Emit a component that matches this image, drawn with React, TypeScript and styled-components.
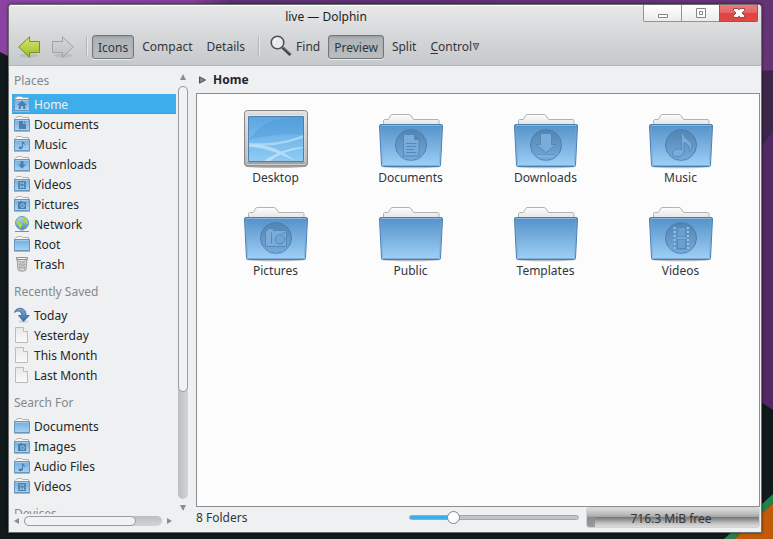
import React, { useState } from "react";
import styled, { createGlobalStyle, css } from "styled-components";

const GlobalStyle = createGlobalStyle`
  * { box-sizing: border-box; }
  body { margin: 0; background: #11181a; }
  body, button, input { font-family: "Noto Sans", "Open Sans", sans-serif; font-size: 12px; color: #31363b; }
  ul { list-style: none; margin: 0; padding: 0; }
`;

const Desktop = styled.div`
  position: relative;
  display: flex;
  height: 100vh;
  padding: 4px 11px 6px 8px;
  overflow: hidden;
`;

const Wallpaper = styled.svg`
  position: absolute;
  inset: 0;
  width: 100%;
  height: 100%;
`;

const Window = styled.section`
  position: relative;
  flex: 1;
  min-width: 0;
  display: flex;
  flex-direction: column;
  border: 1px solid #6d6f70;
  border-radius: 4px 4px 0 0;
  background: #eff0f1;
  overflow: hidden;
  box-shadow: 0 0 3px rgba(0, 0, 0, 0.6);
`;

const Header = styled.header`
  border-bottom: 1px solid #b4b7b9;
  background: linear-gradient(#e9e9e9, #d5d7d9 50%, #c6c9cb);
  box-shadow: inset 0 1px #fff;
`;

const TitleBar = styled.div`
  display: flex;
  height: 23px;
  padding-right: 3px;
`;

const Title = styled.h1`
  flex: 1;
  margin: 0;
  text-align: center;
  font-size: 12px;
  font-weight: 400;
  line-height: 23px;
  color: #1c1e20;
`;

const WindowButton = styled.button<{ $close?: boolean }>`
  display: grid;
  place-items: center;
  width: 39px;
  height: 17px;
  padding: 0;
  margin-right: -1px;
  border: 1px solid #939393;
  border-top: 0;
  background: linear-gradient(#fff, #ececec);
  &:first-of-type { border-bottom-left-radius: 2px; }
  ${(p) => p.$close && css`
    margin-right: 0;
    border-color: #8e5a5c;
    border-bottom-right-radius: 2px;
    background: linear-gradient(#ea7a79, #e66463 50%, #e04343 50%, #e24646);
  `}
`;

const Toolbar = styled.div`
  display: flex;
  align-items: center;
  height: 37px;
  padding: 0 9px;
`;

const NavButton = styled.button`
  display: flex;
  margin-right: 12px;
  padding: 0;
  border: 0;
  background: none;
`;

const Separator = styled.span`
  width: 2px;
  height: 20px;
  margin-right: 4px;
  border-left: 1px solid #b4b7b9;
  border-right: 1px solid #e6e7e8;
`;

const ToolButton = styled.button<{ $wide?: boolean; $menu?: boolean }>`
  display: flex;
  align-items: center;
  gap: ${(p) => (p.$menu ? 0 : 4)}px;
  height: 24px;
  margin-right: ${(p) => (p.$wide ? 7 : 2)}px;
  padding: 0 5px 1px;
  border: 1px solid transparent;
  border-radius: 3px;
  background: none;
  white-space: nowrap;
  &[aria-pressed="true"] {
    padding: 1px 5px 0;
    border-color: #72777a;
    background: linear-gradient(#adb2b5, #b9bdc0);
    box-shadow: inset 0 1px 2px rgba(0, 0, 0, 0.15), 0 1px rgba(255, 255, 255, 0.6);
  }
`;

const Accel = styled.span`
  text-decoration: underline;
  text-underline-offset: 2px;
`;

const Body = styled.div`
  flex: 1;
  min-height: 0;
  display: grid;
  grid-template-columns: 183px 1fr;
  column-gap: 4px;
`;

const Sidebar = styled.aside`
  display: grid;
  grid-template-columns: 1fr 10px;
  grid-template-rows: minmax(0, 1fr) 18px;
  column-gap: 2px;
  min-height: 0;
  padding-right: 4px;
`;

const Places = styled.nav`
  min-height: 0;
  padding-left: 3px;
  overflow: hidden;
`;

const PlacesHeading = styled.h2`
  margin: 0;
  padding: 11px 2px 6px;
  font-size: 12px;
  font-weight: 400;
  line-height: 14px;
  color: #85888b;
  &:first-child { padding-top: 8px; }
`;

const PlaceLink = styled.a`
  display: flex;
  align-items: center;
  gap: 4px;
  height: 20px;
  padding: 0 2px;
  color: #232629;
  text-decoration: none;
  white-space: nowrap;
  &[aria-current] {
    background: #3daee9;
    color: #eff0f1;
    box-shadow: inset 0 -1px #35a3dc;
  }
`;

const ScrollBar = styled.div<{ $horizontal?: boolean }>`
  display: flex;
  ${(p) => p.$horizontal
    ? css`align-items: center; gap: 5px; height: 10px; margin-top: 2px; padding: 0 4px 0 5px;`
    : css`flex-direction: column; align-items: center; gap: 6px; padding: 8px 0 3px;`}
`;

const ScrollArrow = styled.button`
  display: flex;
  padding: 0;
  border: 0;
  background: none;
`;

const ScrollTrack = styled.div<{ $horizontal?: boolean }>`
  flex: 1;
  align-self: stretch;
  border-radius: 5px;
  background: linear-gradient(${(p) => (p.$horizontal ? "" : "90deg, ")}#bdbebf, #d3d4d5);
`;

const ScrollThumb = styled.div<{ $horizontal?: boolean }>`
  width: ${(p) => (p.$horizontal ? "81%" : "100%")};
  height: ${(p) => (p.$horizontal ? "100%" : "74%")};
  border: 1px solid #999b9d;
  border-radius: 5px;
  background: #f1f2f3;
`;

const Content = styled.main`
  min-width: 0;
  display: flex;
  flex-direction: column;
  padding-right: 1px;
`;

const Breadcrumb = styled.nav`
  display: flex;
  align-items: center;
  gap: 7px;
  height: 27px;
  padding: 0 3px;
  font-weight: 700;
  a { color: #232629; text-decoration: none; }
`;

const FileView = styled.ul`
  flex: 1;
  min-height: 0;
  display: grid;
  grid-template-columns: repeat(auto-fill, 135px);
  grid-auto-rows: 93px;
  align-content: start;
  && { padding: 15px 0 0 11px; }
  border: 1px solid #8b8f92;
  background: #fcfcfc;
  overflow: hidden;
`;

const FileButton = styled.button`
  display: flex;
  flex-direction: column;
  align-items: center;
  width: 100%;
  padding: 0;
  border: 0;
  background: none;
  line-height: 18px;
`;

const StatusBar = styled.footer`
  display: flex;
  align-items: flex-start;
  height: 25px;
  line-height: 22px;
`;

const Summary = styled.span`
  flex: 1;
`;

const ZoomSlider = styled.input`
  appearance: none;
  width: 170px;
  height: 21px;
  margin: 0 7px 0 0;
  background: none;
  &::-webkit-slider-runnable-track {
    height: 5px;
    border: 1px solid #a2a6a8;
    border-radius: 3px;
    background: linear-gradient(90deg, #3daee9 26%, #c0c5c7 26%);
  }
  &::-webkit-slider-thumb {
    appearance: none;
    width: 13px;
    height: 13px;
    margin-top: -5px;
    border: 1px solid #7f8487;
    border-radius: 50%;
    background: #fdfdfd;
  }
`;

const Capacity = styled.div`
  width: 174px;
  height: 21px;
  border: 1px solid #d2d3d4;
  border-radius: 3px;
  background: linear-gradient(#dcdddd, #b9b9b9 35%, #a0a0a0 48%, #7b7b7b 50%, #949494 62%, #bcbcbc 78%, #dfdfdf);
  padding-right: 4px;
  text-align: center;
`;

const CapacityUsed = styled.div`
  width: 5%;
  height: 19px;
  margin-bottom: -19px;
  border-radius: 2px 0 0 2px;
  background: linear-gradient(transparent 45%, #8b8b8b 50%, #9c9c9c);
`;

type Glyph = "none" | "home" | "document" | "music" | "download" | "video" | "camera";

const SMALL_GLYPHS: Record<Glyph, React.ReactNode> = {
  none: null,
  home: <path d="M8 4.5 3 9h1.7v4h2.2v-3h2.2v3h2.2V9H13z" />,
  document: <path d="M5 5h4v3h3v5H5zM10 5l2 2h-2z" />,
  music: <path d="M8 4.500c.3 1.800 3.900 2 3.200 5.500-.3-1.700-1.200-2-2.200-2V11c0 2.600-4.500 2.700-4.500 1 0-1.300 2.200-1.700 3.500-1.300z" />,
  download: <path d="M6.500 5h3v3.500H12L8 12.800 4 8.500h2.500z" />,
  video: <path fillRule="evenodd" d="M4 5h8v8H4zM6 6v2.300h1.600V6zm2.400 0v2.300H10V6zM6 9.500V12h1.600V9.500zm2.400 0V12H10V9.500zM4.500 6v1h.8V6zm0 2.500v1h.8v-1zm0 2.500v1h.8v-1zM10.700 6v1h.8V6zm0 2.500v1h.8v-1zm0 2.500v1h.8v-1z" />,
  camera: <path fillRule="evenodd" d="M4 6h2V5h2v1h4v7H4zm4.500 1.300a2.300 2.300 0 1 0 .1 0zm0 1.200a1.200 1.200 0 1 1-.1 0z" />,
};

function SmallFolder({ glyph = "none" }: { glyph?: Glyph }) {
  return (
    <svg width="16" height="16" viewBox="0 0 16 16" aria-hidden="true">
      <path d="M1 15.500V2.500L2 1.500h.5L3 .5h4.500l1 1H14.500v3" fill="#f8f8f8" stroke="#aeb2b5" />
      <path d="M0 15.500h16" stroke="#aeb4b9" />
      <path d="M.5 3.500h15v11H.5z" fill="url(#small-front)" stroke="#6b96bb" />
      <path d="M1.500 4.500h13" stroke="#a3cbea" />
      <g fill="#4c7fab">{SMALL_GLYPHS[glyph]}</g>
    </svg>
  );
}

function NetworkIcon() {
  return (
    <svg width="16" height="16" viewBox="0 0 16 16" aria-hidden="true">
      <path d="M1 15.500h14" stroke="#898d90" />
      <path d="M6 14h4v1H6z" fill="#c9cdd0" />
      <circle cx="8" cy="7" r="6.500" fill="url(#globe)" stroke="#5f97cf" />
      <path d="M6.500 2C8.500.8 11 1 12.500 3c1.300 1.500 1.700 4 .5 5.500-.7-.2-1.200-1-1-2-1 0-2.500.5-3-.8-.3-1 .3-1.700-.8-1.700-.7 0-1.200-.8-1.700-2zM2.500 4.500C4 4.300 4.600 6 6 6.500c1.500.5 2.500 1.500 2 3S6.500 11.500 6 12.500C4.500 11 5 9.500 3.500 8.500 2.300 7.500 2 6 2.500 4.500z" fill="#b3d63c" />
      <path d="M10 9.500c1-.5 1.700 0 1.500 1s-1 1.300-1.500 1z" fill="#86b51f" />
    </svg>
  );
}

function TrashIcon() {
  return (
    <svg width="16" height="16" viewBox="0 0 16 16" aria-hidden="true">
      <path d="M3 2.500 4 14c1 1.500 7 1.500 8 0l1-11.500z" fill="#e2e2e2" stroke="#9a9a9a" />
      <path d="M5 4.500 5.500 14M7 5v9.500M9 5v9.500M11 4.500 10.500 14" stroke="#8f8f8f" strokeDasharray="2 1" />
      <path d="M3.500 7.500h9M4 10.500h8" stroke="#c2c2c2" />
      <path d="M2.500 1.500h11v2h-11z" fill="#d9d9d9" stroke="#919191" />
      <path d="M4 2.500h8" stroke="#f1f1f1" />
    </svg>
  );
}

function TodayIcon() {
  return (
    <svg width="16" height="16" viewBox="0 0 16 16" aria-hidden="true">
      <ellipse cx="9.500" cy="14.500" rx="5" ry="1.300" fill="#cfd3d7" />
      <path d="M.5 5.500C1.500 1 7 .2 9.800 2.500c2 1.500 2.200 3.500 2.200 6h3.300L9.500 14.500 4.500 8.500H7.700c0-3-1.500-4.500-3.700-4.500C2.500 4 1.500 5 .5 5.500z" fill="url(#today)" stroke="#3d6797" strokeWidth=".8" />
    </svg>
  );
}

function PageIcon() {
  return (
    <svg width="16" height="16" viewBox="0 0 16 16" aria-hidden="true">
      <path d="M1.500.5h8l4 4v11h-12z" fill="url(#page)" stroke="#bcbcbc" />
      <path d="M9.500.5v4h4" fill="#fff" stroke="#bcbcbc" />
    </svg>
  );
}

const LARGE_GLYPHS: Record<Glyph, React.ReactNode> = {
  none: null,
  home: <path d="M32 24 20 35h4v10h16V35h4z" />,
  document: (
    <>
      <path d="M24.500 25.500h11l4.500 5v16.500H24.500z" />
      <path d="M35.500 25.500v5H40" fill="#4f83b2" />
      <path d="M27 34.500h10.500M27 37.500h10.500M27 40.500h8M27 43.500h10.500" fill="none" />
    </>
  ),
  download: (
    <>
      <path d="M26.500 24.500h11v11h4.500L32 43.800l-10-8.300h4.500z" />
      <path d="M23.500 46h17" />
      <path d="M23.500 47h17" stroke="#93c3ed" />
    </>
  ),
  music: <path d="M32.500 24H34c1 7.500 9 6.500 9 13 0 2.500-1 4.500-2.500 6 .5-5-1.500-8.500-5.500-9.500v8.500c0 6.500-10.500 8-11.500 3.300-.5-4.300 4.500-6.300 9-4.800z" />,
  camera: (
    <>
      <path d="M21.500 28.500h2l.5-2h5l.5 2h13v16h-21z" />
      <path d="M27.500 30.500v11M38 31h4" fill="none" />
      <circle cx="36" cy="37.500" r="4.800" fill="#6fa4d3" />
    </>
  ),
  video: (
    <>
      <path d="M24.500 25h15v22h-15z" fill="#6498c6" stroke="#5b90c0" />
      <path d="M28.500 25.500h8v9.500h-8zM28.500 37h8v9.500h-8z" fill="#6a9fcf" />
      <path d="M25.500 25v22M39 25v22" stroke="#94c3ec" strokeDasharray="2 2" strokeWidth="2" />
      <path d="M28 36h9" stroke="#94c3ec" />
    </>
  ),
};

const LargeFolder = ({ glyph }: { glyph: Glyph }) => (
  <svg width="64" height="60" viewBox="0 0 64 60" aria-hidden="true">
    <ellipse cx="32" cy="57.500" rx="30" ry="1.800" fill="#b8bdc2" />
    <path d="M4.500 18v-6c0-1 .5-1.500 1.500-1.500h3c1.500 0 2-5 4-5h17c3 0 3 5 5 5h23c1.500 0 2 .5 2 1.500v6z" fill="url(#paper)" stroke="#b2b2b2" />
    <path d="M1.500 15.500h61c.8 0 1.200.700 1 1.500L61.500 56c0 1-1 1.500-2 1.500h-55c-1 0-2-.5-2-1.500L.5 17c0-1 .2-1.500 1-1.500z" fill="url(#front)" stroke="#4a80b0" />
    <path d="M2 16.500h60" stroke="#86b7e2" />
    <path d="M4 56.500h56" stroke="#7badd8" />
    <path d="M2 18 3.500 55M62 18 60.500 55" stroke="#75a9d8" strokeOpacity=".6" />
    {glyph !== "none" && (
      <>
        <circle cx="32" cy="36" r="15.500" fill="url(#badge)" stroke="#4c80af" />
        <path d="M18.500 44a15.500 15.500 0 0 0 27 0" fill="none" stroke="#7db1df" strokeOpacity=".6" />
        <g fill="#79acda" stroke="#5388b9" strokeWidth="1">{LARGE_GLYPHS[glyph]}</g>
      </>
    )}
  </svg>
);

const DesktopIcon = () => (
  <svg width="64" height="60" viewBox="0 0 64 60" aria-hidden="true">
    <ellipse cx="32" cy="57.500" rx="31" ry="1.500" fill="#b9b9b9" />
    <rect x=".5" y="1.500" width="63" height="55.500" rx="3" fill="url(#frame)" stroke="#868686" />
    <rect x="2" y="3" width="60" height="52.500" rx="2" fill="none" stroke="#f4f4f4" strokeOpacity=".6" />
    <path d="M3.500 6.500h57v46.500h-57z" fill="#f3f3f3" />
    <path d="M4.500 7.500h55v45h-55z" fill="url(#screen)" stroke="#4f7fb0" />
    <path d="M5 31C14 16 30 9 50 8h9v18C42 24 20 27 5 31z" fill="#4593d4" fillOpacity=".35" />
    <path d="M5 34C26 35 42 33 59 26v3C40 36 20 38 5 36z" fill="#d3effd" fillOpacity=".5" />
    <path d="M5 36C24 34 38 42 52 52 36 45 21 38 5 38zM20 52c13-9 25-13 39-14v1C42 42 32 47 26 52z" fill="#e8f8ff" fillOpacity=".5" />
  </svg>
);

const SharedGradients = () => (
  <defs>
    {[
      ["small-front", "#72abd9", "#a5d4f8"],
      ["front", "#5491c8", "#a0d0f7"],
      ["badge", "#5283b0", "#76abdb"],
      ["paper", "#fdfdfd", "#dfdfdf"],
      ["frame", "#dedede", "#9d9d9d"],
      ["screen", "#5ca5e0", "#8fccf6"],
      ["page", "#e9e9e9", "#fafafa"],
      ["today", "#7ba6d3", "#386ca8"],
      ["globe", "#b2dffa", "#3f86cf"],
      ["arrow-green", "#dbe86a", "#9bbb2e"],
      ["arrow-grey", "#d4d6d8", "#bec1c3"],
    ].map(([id, top, bottom]) => (
      <linearGradient key={id} id={id} x1="0" y1="0" x2="0" y2="1">
        <stop offset="0" stopColor={top} />
        <stop offset="1" stopColor={bottom} />
      </linearGradient>
    ))}
    <linearGradient id="purple" x1="0" y1="0" x2="1" y2="0">
      <stop offset="0" stopColor="#8c43a4" />
      <stop offset=".25" stopColor="#82409a" />
      <stop offset=".3" stopColor="#5b3070" />
      <stop offset="1" stopColor="#653474" />
    </linearGradient>
  </defs>
);

const NavArrow = ({ forward = false }: { forward?: boolean }) => (
  <svg width="22" height="22" viewBox="0 0 22 22" aria-hidden="true">
    <ellipse cx="11" cy="19.500" rx="9" ry="2" fill="#a9adaf" fillOpacity=".5" />
    {forward ? (
      <path d="M.5 5.500h10V.8L21.300 11 10.500 21.200v-4.700H.5z" fill="url(#arrow-grey)" stroke="#a0a3a5" />
    ) : (
      <path d="M21.500 5.500h-10V.8L.7 11l10.800 10.200v-4.700h10z" fill="url(#arrow-green)" stroke="#6f9418" />
    )}
  </svg>
);

const SearchIcon = () => (
  <svg width="22" height="22" viewBox="0 0 22 22" aria-hidden="true">
    <circle cx="7.500" cy="7.500" r="6.300" fill="#e7e9ea" stroke="#4f5355" strokeWidth="1.600" />
    <path d="M4 7a4 4 0 0 1 4-3.500" fill="none" stroke="#fff" />
    <path d="m12.500 12.500 8 7.500" stroke="#404345" strokeWidth="3" />
    <path d="m13 11.800 7 6.500" stroke="#85888a" />
  </svg>
);

interface Place { label: string; icon: React.ReactNode }

const SECTIONS: { heading: string; places: Place[] }[] = [
  {
    heading: "Places",
    places: [
      { label: "Home", icon: <SmallFolder glyph="home" /> },
      { label: "Documents", icon: <SmallFolder glyph="document" /> },
      { label: "Music", icon: <SmallFolder glyph="music" /> },
      { label: "Downloads", icon: <SmallFolder glyph="download" /> },
      { label: "Videos", icon: <SmallFolder glyph="video" /> },
      { label: "Pictures", icon: <SmallFolder glyph="camera" /> },
      { label: "Network", icon: <NetworkIcon /> },
      { label: "Root", icon: <SmallFolder /> },
      { label: "Trash", icon: <TrashIcon /> },
    ],
  },
  {
    heading: "Recently Saved",
    places: [
      { label: "Today", icon: <TodayIcon /> },
      { label: "Yesterday", icon: <PageIcon /> },
      { label: "This Month", icon: <PageIcon /> },
      { label: "Last Month", icon: <PageIcon /> },
    ],
  },
  {
    heading: "Search For",
    places: [
      { label: "Documents", icon: <SmallFolder /> },
      { label: "Images", icon: <SmallFolder glyph="camera" /> },
      { label: "Audio Files", icon: <SmallFolder glyph="music" /> },
      { label: "Videos", icon: <SmallFolder glyph="video" /> },
    ],
  },
  { heading: "Devices", places: [] },
];

const FILES: { label: string; glyph: Glyph | "desktop" }[] = [
  { label: "Desktop", glyph: "desktop" },
  { label: "Documents", glyph: "document" },
  { label: "Downloads", glyph: "download" },
  { label: "Music", glyph: "music" },
  { label: "Pictures", glyph: "camera" },
  { label: "Public", glyph: "none" },
  { label: "Templates", glyph: "none" },
  { label: "Videos", glyph: "video" },
];

const ARROWS = {
  up: { size: [6, 6], d: "M3 0 6 6H0z" },
  down: { size: [6, 6], d: "M0 0h6L3 6z" },
  left: { size: [5, 6], d: "M5 0v6L0 3z" },
  right: { size: [5, 6], d: "M0 0l5 3-5 3z" },
};

const ArrowButton = ({ direction }: { direction: keyof typeof ARROWS }) => {
  const { size: [width, height], d } = ARROWS[direction];
  return (
    <ScrollArrow aria-label={`Scroll ${direction}`}>
      <svg width={width} height={height} viewBox={`0 0 ${width} ${height}`}><path d={d} fill="#8a8d8f" /></svg>
    </ScrollArrow>
  );
};

export default function App() {
  const [mode, setMode] = useState("Icons");
  const [preview, setPreview] = useState(true);
  const [zoom, setZoom] = useState(24);

  return (
    <Desktop>
      <GlobalStyle />
      <Wallpaper viewBox="0 0 773 539" preserveAspectRatio="none" aria-hidden="true">
        <SharedGradients />
        <path d="M0 0h773v539H0z" fill="#11191b" />
        <path d="M0 0h773v400l-20-10V20H8v36L0 52z" fill="url(#purple)" />
        <path d="M755 72c8-2 12-2 18-2v340l-18-12z" fill="#522962" />
        <path d="M755 74c8-4 12-3 18-3v60c-8 10-14 20-18 30z" fill="#3d264a" />
        <path d="M773 494v9l-39 36h-10z" fill="#22824d" />
        <path d="M773 503v36h-39z" fill="#c25b09" />
      </Wallpaper>
      <Window aria-label="Dolphin">
        <Header>
          <TitleBar>
            <Title>live — Dolphin</Title>
            <WindowButton aria-label="Minimize">
              <svg width="12" height="12" viewBox="0 0 12 12"><path d="M1.500 7.500h9v3h-9z" fill="#fff" stroke="#858585" /></svg>
            </WindowButton>
            <WindowButton aria-label="Maximize">
              <svg width="12" height="12" viewBox="0 0 12 12" fill="#fff" stroke="#858585"><path d="M1.500 1.500h9v9h-9zM4.500 4.500h3v3h-3z" /></svg>
            </WindowButton>
            <WindowButton $close aria-label="Close">
              <svg width="12" height="12" viewBox="0 0 12 12"><path d="M.5 1.500H5L6 3l1-1.500h4.500v2L9 6l2.500 2.500v2H7L6 9l-1 1.500H.5v-2L3 6 .5 3.500z" fill="#fff" stroke="#96494b" /></svg>
            </WindowButton>
          </TitleBar>
          <Toolbar role="toolbar" aria-label="Main toolbar">
            <NavButton aria-label="Back"><NavArrow /></NavButton>
            <NavButton aria-label="Forward" disabled><NavArrow forward /></NavButton>
            <Separator />
            {["Icons", "Compact", "Details"].map((name) => (
              <ToolButton key={name} $wide={name === "Details"} aria-pressed={mode === name} onClick={() => setMode(name)}>{name}</ToolButton>
            ))}
            <Separator />
            <ToolButton><SearchIcon />Find</ToolButton>
            <ToolButton aria-pressed={preview} onClick={() => setPreview(!preview)}>Preview</ToolButton>
            <ToolButton>Split</ToolButton>
            <ToolButton $menu aria-haspopup="menu">
              <span><Accel>C</Accel>ontrol</span>
              <svg width="8" height="10" viewBox="0 0 8 10"><path d="M1 2.500h6L4 9z" fill="#999c9e" stroke="#5f6365" /></svg>
            </ToolButton>
          </Toolbar>
        </Header>
        <Body>
          <Sidebar>
            <Places aria-label="Places">
              {SECTIONS.map(({ heading, places }) => (
                <React.Fragment key={heading}>
                  <PlacesHeading>{heading}</PlacesHeading>
                  <ul>
                    {places.map(({ label, icon }) => (
                      <li key={label}>
                        <PlaceLink href="#" aria-current={label === "Home" ? "location" : undefined}>{icon}{label}</PlaceLink>
                      </li>
                    ))}
                  </ul>
                </React.Fragment>
              ))}
            </Places>
            <ScrollBar>
              <ArrowButton direction="up" />
              <ScrollTrack><ScrollThumb /></ScrollTrack>
              <ArrowButton direction="down" />
            </ScrollBar>
            <ScrollBar $horizontal>
              <ArrowButton direction="left" />
              <ScrollTrack $horizontal><ScrollThumb $horizontal /></ScrollTrack>
              <ArrowButton direction="right" />
            </ScrollBar>
          </Sidebar>
          <Content>
            <Breadcrumb aria-label="Location">
              <svg width="7" height="8" viewBox="0 0 7 8" aria-hidden="true"><path d="M.5.8 6.500 4 .5 7.200z" fill="#85888a" stroke="#4d5154" /></svg>
              <a href="#">Home</a>
            </Breadcrumb>
            <FileView>
              {FILES.map(({ label, glyph }) => (
                <li key={label}>
                  <FileButton>
                    {glyph === "desktop" ? <DesktopIcon /> : <LargeFolder glyph={glyph} />}
                    {label}
                  </FileButton>
                </li>
              ))}
            </FileView>
            <StatusBar>
              <Summary>8 Folders</Summary>
              <ZoomSlider type="range" aria-label="Icon size" value={zoom} onChange={(e) => setZoom(Number(e.target.value))} />
              <Capacity role="meter" aria-label="Disk space" aria-valuenow={5} aria-valuemin={0} aria-valuemax={100}>
                <CapacityUsed />
                716.3 MiB free
              </Capacity>
            </StatusBar>
          </Content>
        </Body>
      </Window>
    </Desktop>
  );
}
